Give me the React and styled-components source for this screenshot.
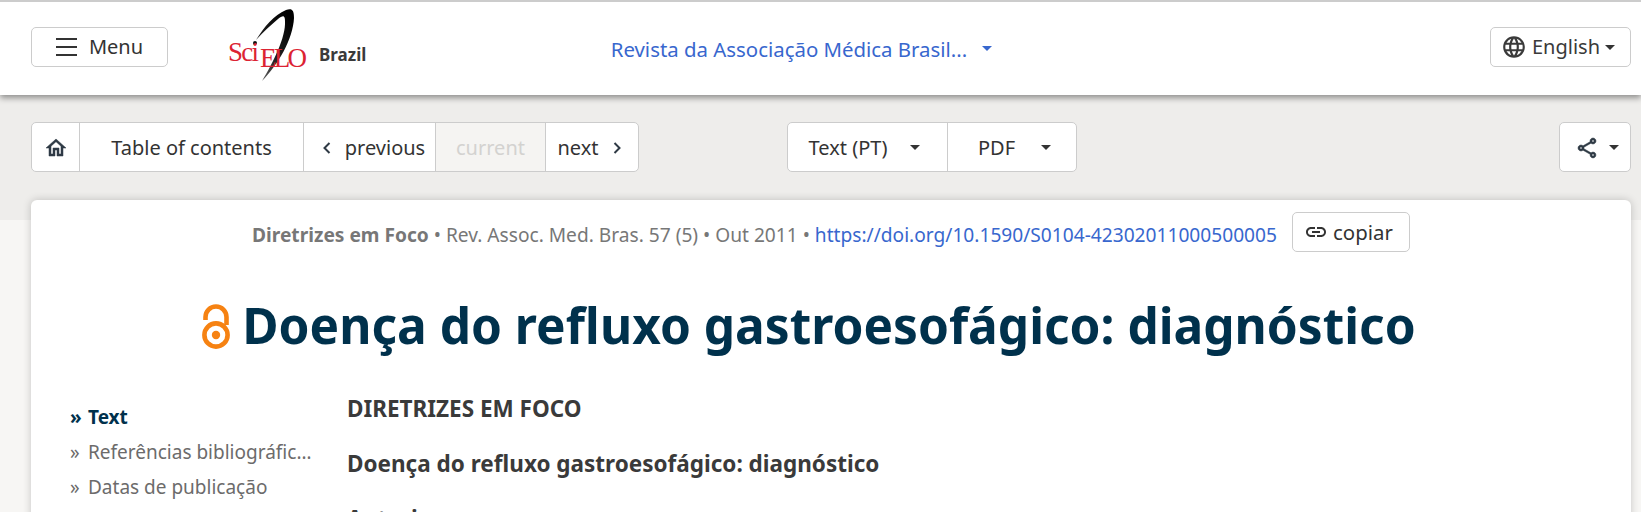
import React from "react";
import styled, { createGlobalStyle } from "styled-components";
import { MdOutlineHome, MdLanguage, MdOutlineShare, MdLink } from "react-icons/md";

const Global = createGlobalStyle`
  html, body { margin: 0; padding: 0; height: 512px; overflow: hidden; background: #f7f6f4; }
  body { font-family: "Noto Sans", sans-serif; color: #333; }
  * { box-sizing: border-box; }
`;

const Page = styled.div`
  position: relative;
  height: 512px;
  overflow: hidden;
`;
const Header = styled.header`
  position: relative;
  z-index: 2;
  height: 95px;
  background: #fff;
  border-top: 2px solid #ccc;
  box-shadow: 0 3px 6px rgba(0, 0, 0, 0.4);
  display: grid;
  grid-template-columns: 1fr auto 1fr;
  align-items: center;
  padding: 0 10px 3px 31px;
`;
const HeaderLeft = styled.div`
  display: flex;
  align-items: center;
`;
const HeaderRight = styled.div`
  display: flex;
  justify-content: flex-end;
`;
const OutlineButton = styled.button`
  height: 40px;
  background: #fff;
  border: 1px solid #ccc;
  border-radius: 5px;
  font: 400 20px/1 "Noto Sans", sans-serif;
  color: #333;
  display: inline-flex;
  align-items: center;
  justify-content: center;
  padding: 0;
`;
const MenuButton = styled(OutlineButton)`
  width: 137px;
  gap: 12px;
`;
const Burger = styled.span`
  width: 21px;
  height: 18px;
  border-top: 2px solid #333;
  border-bottom: 2px solid #333;
  position: relative;
  &::after {
    content: "";
    position: absolute;
    left: 0;
    right: 0;
    top: 6px;
    height: 2px;
    background: #333;
  }
`;
const Logo = styled.a`
  margin-left: 60px;
  display: flex;
  align-items: center;
  height: 80px;
`;
const BrandName = styled.span`
  font-size: 17px;
  font-weight: 700;
  color: #3a3a3a;
  margin: 15px 0 0 9px;
`;
const JournalLink = styled.a`
  margin: 3px 0 0 -59px;
  display: flex;
  align-items: center;
  gap: 15px;
  font-size: 20.4px;
  color: #3867ce;
`;
const Caret = styled.span`
  display: inline-block;
  width: 0;
  height: 0;
  border-left: 5px solid transparent;
  border-right: 5px solid transparent;
  border-top: 5px solid ${(p) => p.$color || "#333"};
`;
const LangButton = styled(OutlineButton)`
  width: 141px;
  gap: 5px;
  padding-right: 5px;
  color: #3a3a3a;
  svg { font-size: 26px; }
`;
const Band = styled.div`
  height: 125px;
  background: #eeedeb;
  padding: 27px 10px 0 31px;
  display: flex;
  align-items: flex-start;
`;
const Group = styled.div`
  display: inline-flex;
  height: 50px;
  background: #fff;
  border: 1px solid #ccc;
  border-radius: 5px;
  overflow: hidden;
`;
const Seg = styled.span`
  width: ${(p) => p.$w}px;
  display: flex;
  align-items: center;
  justify-content: center;
  gap: ${(p) => p.$gap || 0}px;
  padding: 1px ${(p) => p.$pr || 0}px 0 ${(p) => p.$pl || 0}px;
  font-size: 20px;
  color: ${(p) => (p.$off ? "#d3d2d0" : "#333")};
  background: ${(p) => (p.$off ? "#f5f4f2" : "transparent")};
  & + & { border-left: 1px solid #ccc; }
`;
const NavIcon = styled.span`
  display: flex;
  font-size: 24px;
  color: #2f3a45;
  path:not([fill="none"]) {
    stroke: currentColor;
    stroke-width: 0.5;
  }
`;
const CenterBar = styled.div`
  margin-left: 148px;
`;
const RightBar = styled.div`
  margin-left: auto;
`;
const Card = styled.main`
  position: relative;
  margin: -20px 10px 0 31px;
  height: 400px;
  background: #fff;
  border-radius: 6px 6px 0 0;
  box-shadow: 0 0 8px rgba(0, 0, 0, 0.2);
  padding: 12px 0 0;
`;
const Meta = styled.div`
  display: flex;
  justify-content: center;
  align-items: center;
  height: 40px;
  gap: 15px;
  font-size: 19.15px;
  color: #777;
`;
const MetaText = styled.span`
  white-space: nowrap;
  margin-top: 5px;
  b { font-weight: 700; }
`;
const Doi = styled.a`
  color: #3867ce;
`;
const CopyButton = styled(OutlineButton)`
  width: 118px;
  gap: 5px;
  padding-right: 5px;
  font-size: 20.4px;
  svg { font-size: 24px; }
`;
const Title = styled.h1`
  margin: 37px 0 0;
  padding-right: 44px;
  height: 72px;
  display: flex;
  align-items: center;
  justify-content: center;
  gap: 12px;
  font-size: 49.6px;
  line-height: 72px;
  font-weight: 700;
  color: #00314c;
  svg { margin-top: 4px; }
`;
const Columns = styled.div`
  margin-top: 32px;
  padding-left: 39px;
  display: grid;
  grid-template-columns: 277px 1fr;
`;
const Side = styled.nav`
  padding-top: 12px;
  display: flex;
  flex-direction: column;
  gap: 10px;
`;
const SideItem = styled.a`
  width: 245px;
  font-size: 19px;
  line-height: 25px;
  font-weight: ${(p) => (p.$active ? 700 : 400)};
  color: ${(p) => (p.$active ? "#00314c" : "#6c6b6b")};
  white-space: nowrap;
  overflow: hidden;
  text-overflow: ellipsis;
`;
const Marker = styled.span`
  display: inline-block;
  width: 18px;
`;
const Body = styled.article`
  h2, h3 {
    margin: 0;
    font-size: 22.5px;
    line-height: 30px;
    font-weight: 700;
    color: #3a3a3a;
  }
  h2 { margin-top: 1px; }
  h3 { margin-top: 25px; }
`;

const ScieloLogo = () => (
  <svg width="82" height="80" viewBox="0 0 82 80" style={{ display: "block" }}>
    <defs>
      <linearGradient id="sw" x1="0.7" y1="0" x2="0.1" y2="1">
        <stop offset="0" stopColor="#000" />
        <stop offset="0.6" stopColor="#222" />
        <stop offset="1" stopColor="#666" />
      </linearGradient>
    </defs>
    <path d="M28 33C36 20 46 8 58 3 64 1 66 3 66 11 65 32 50 58 34 74 45 56 58 30 57 14 57 8 55 8 50 12 43 18 35 25 28 33Z" fill="url(#sw)" />
    <circle cx="27" cy="36" r="2" fill="#111" />
    <text x="0" y="54" fontFamily="'Liberation Serif', serif" fontSize="27" fill="#dc2333" textLength="31">Sci</text>
    <text x="32" y="60" fontFamily="'Liberation Serif', serif" fontSize="27" fill="#dc2333" textLength="47">ELO</text>
  </svg>
);

const OpenAccess = () => (
  <svg width="28" height="46" viewBox="0 0 28 46">
    <path d="M3.5 16V13a10.5 10.5 0 0 1 21 0v8" fill="none" stroke="#f68212" strokeWidth="4.6" />
    <circle cx="14" cy="31" r="11.6" fill="none" stroke="#f68212" strokeWidth="4.6" />
    <circle cx="14" cy="31" r="4.2" fill="#f68212" />
  </svg>
);

const Chevron = ({ left }) => (
  <svg width="10" height="14" viewBox="0 0 10 14">
    <path d={left ? "M7.5 2 2.5 7l5 5" : "M2.5 2l5 5-5 5"} fill="none" stroke="#2f3a45" strokeWidth="2" />
  </svg>
);

export default function App() {
  return (
    <Page>
      <Global />
      <Header>
        <HeaderLeft>
          <MenuButton><Burger />Menu</MenuButton>
          <Logo>
            <ScieloLogo />
            <BrandName>Brazil</BrandName>
          </Logo>
        </HeaderLeft>
        <JournalLink>
          Revista da Associação Médica Brasil...
          <Caret $color="#3867ce" />
        </JournalLink>
        <HeaderRight>
          <LangButton><MdLanguage />English<Caret /></LangButton>
        </HeaderRight>
      </Header>
      <Band>
        <Group>
          <Seg $w={47}><NavIcon><MdOutlineHome /></NavIcon></Seg>
          <Seg $w={224}>Table of contents</Seg>
          <Seg $w={132} $gap={13} $pl={8}><Chevron left />previous</Seg>
          <Seg $w={110} $off>current</Seg>
          <Seg $w={93} $gap={13} $pr={5}>next<Chevron /></Seg>
        </Group>
        <CenterBar>
          <Group>
            <Seg $w={159} $gap={23} $pr={6}>Text (PT)<Caret /></Seg>
            <Seg $w={129} $gap={26} $pl={5}>PDF<Caret /></Seg>
          </Group>
        </CenterBar>
        <RightBar>
          <Group>
            <Seg $w={70} $gap={10} $pl={3}><NavIcon><MdOutlineShare /></NavIcon><Caret /></Seg>
          </Group>
        </RightBar>
      </Band>
      <Card>
        <Meta>
          <MetaText>
            <b>Diretrizes em Foco</b> • Rev. Assoc. Med. Bras. 57 (5) • Out 2011 • <Doi>https://doi.org/10.1590/S0104-42302011000500005</Doi>
          </MetaText>
          <CopyButton><MdLink />copiar</CopyButton>
        </Meta>
        <Title><OpenAccess />Doença do refluxo gastroesofágico: diagnóstico</Title>
        <Columns>
          <Side>
            <SideItem $active><Marker>»</Marker>Text</SideItem>
            <SideItem><Marker>»</Marker>Referências bibliográficas</SideItem>
            <SideItem><Marker>»</Marker>Datas de publicação</SideItem>
          </Side>
          <Body>
            <h2>DIRETRIZES EM FOCO</h2>
            <h3>Doença do refluxo gastroesofágico: diagnóstico</h3>
            <h3>Autoria</h3>
          </Body>
        </Columns>
      </Card>
    </Page>
  );
}
